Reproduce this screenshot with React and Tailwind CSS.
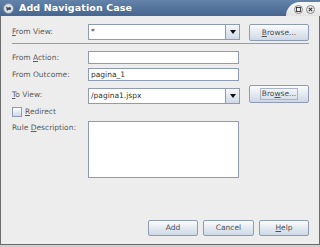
import React from "react";

const TextField = ({ value, className = "" }) => (
  <div
    className={`h-[13px] w-[151px] bg-white border border-[#8e9bb0] flex items-center pl-[2px] text-[7.5px] text-[#333] ${className}`}
  >
    {value}
  </div>
);

const Combo = ({ value, className = "" }) => (
  <div className={`h-[16px] w-[152px] flex border border-[#8e9bb0] bg-white ${className}`}>
    <div className="flex-1 flex items-center pl-[2px] text-[7.5px] text-[#333]">{value}</div>
    <div className="w-[14px] border-l border-[#8e9bb0] bg-gradient-to-b from-[#f6f8fb] to-[#cfd9e6] flex items-center justify-center">
      <svg width="6" height="4" viewBox="0 0 6 4">
        <path d="M0 0 H6 L3 4 Z" fill="#111" />
      </svg>
    </div>
  </div>
);

const Button = ({ children, className = "" }) => (
  <div
    className={`flex items-center justify-center rounded-[2px] border border-[#8e9bb0] bg-gradient-to-b from-[#fbfcfd] to-[#cdd8e6] text-[7.5px] text-[#505050] ${className}`}
  >
    {children}
  </div>
);

const U = ({ children }) => <span className="underline underline-offset-1">{children}</span>;

export default function App() {
  return (
    <div className="w-[320px] h-[247px] bg-[#d0d0d0] font-['DejaVu_Sans',sans-serif] leading-none">
      {/* Title bar */}
      <div className="h-[16px] flex bg-gradient-to-b from-[#6383aa] to-[#46668f]">
        <div className="flex-1 flex items-center pl-[3px] gap-[5px]">
          <svg width="11" height="11" viewBox="0 0 11 11">
            <circle cx="5.5" cy="5.5" r="5" fill="#d9dee4" stroke="#7c8898" />
            <path d="M3 3.5 L6.5 5.5 L4 8 Z" fill="#3d4652" />
            <circle cx="6.5" cy="5.5" r="1.5" fill="#3d4652" />
          </svg>
          <span className="text-white font-bold text-[9.5px] tracking-[0.1px]">Add Navigation Case</span>
        </div>
        <div className="w-[34px] mt-[2px] rounded-tl-[14px] bg-gradient-to-b from-[#f7f7f7] to-[#e4e4e4] flex items-center gap-[3px] pl-[8px] pt-[1px]">
          <svg width="9" height="9" viewBox="0 0 9 9">
            <circle cx="4.5" cy="4.5" r="4" fill="#ececec" stroke="#8a8a8a" />
            <rect x="2.5" y="2.5" width="4" height="4" fill="none" stroke="#333" strokeWidth="0.9" />
          </svg>
          <svg width="9" height="9" viewBox="0 0 9 9">
            <circle cx="4.5" cy="4.5" r="4" fill="#ececec" stroke="#8a8a8a" />
            <path d="M2.8 2.8 L6.2 6.2 M6.2 2.8 L2.8 6.2" stroke="#333" strokeWidth="1.1" />
          </svg>
        </div>
      </div>

      {/* Body */}
      <div className="h-[229px] flex flex-col bg-[#ededed] border-x border-b border-[#6b6b6b] pl-[11px] pr-[10px] pt-[8px] pb-[8px] text-[7.5px] text-[#5a5a5a]">
        {/* From View */}
        <div className="flex items-start">
          <div className="w-[76px] h-[16px] flex items-center">
            <span><U>F</U>rom View:</span>
          </div>
          <Combo value="*" />
          <Button className="ml-[9px] w-[60px] h-[17px]">
            <span><U>B</U>rowse...</span>
          </Button>
        </div>

        <div className="mt-[2px] h-px bg-[#8d9dba]" />

        {/* From Action */}
        <div className="flex items-center mt-[7px]">
          <div className="w-[76px]">
            From <U>A</U>ction:
          </div>
          <TextField value="" />
        </div>

        {/* From Outcome */}
        <div className="flex items-center mt-[4px]">
          <div className="w-[76px]">From Outcome:</div>
          <TextField value="pagina_1" />
        </div>

        {/* To View */}
        <div className="flex items-start mt-[4px]">
          <div className="w-[76px] h-[16px] mt-[2px] flex items-center">
            <span><U>T</U>o View:</span>
          </div>
          <Combo value="/pagina1.jspx" className="mt-[3px]" />
          <Button className="ml-[9px] w-[60px] h-[18px]">
            <span className="border border-[#a9b5c6] px-[1px] py-[1px]">
              Bro<U>w</U>se...
            </span>
          </Button>
        </div>

        {/* Redirect */}
        <div className="flex items-center gap-[3px] mt-[3px]">
          <div className="w-[10px] h-[10px] border border-[#8e9bb0] bg-gradient-to-b from-[#ffffff] to-[#cdd8e6]" />
          <span>
            <U>R</U>edirect
          </span>
        </div>

        {/* Rule Description */}
        <div className="flex items-start mt-[4px]">
          <div className="w-[76px] pt-[3px]">
            Rule <U>D</U>escription:
          </div>
          <div className="w-[151px] h-[57px] bg-white border border-[#8e9bb0]" />
        </div>

        {/* Buttons */}
        <div className="mt-auto flex justify-end gap-[5px]">
          <Button className="w-[50px] h-[16px] border-[#5d708c]">Add</Button>
          <Button className="w-[51px] h-[16px]">Cancel</Button>
          <Button className="w-[50px] h-[16px]">
            <span>
              <U>H</U>elp
            </span>
          </Button>
        </div>
      </div>
    </div>
  );
}
